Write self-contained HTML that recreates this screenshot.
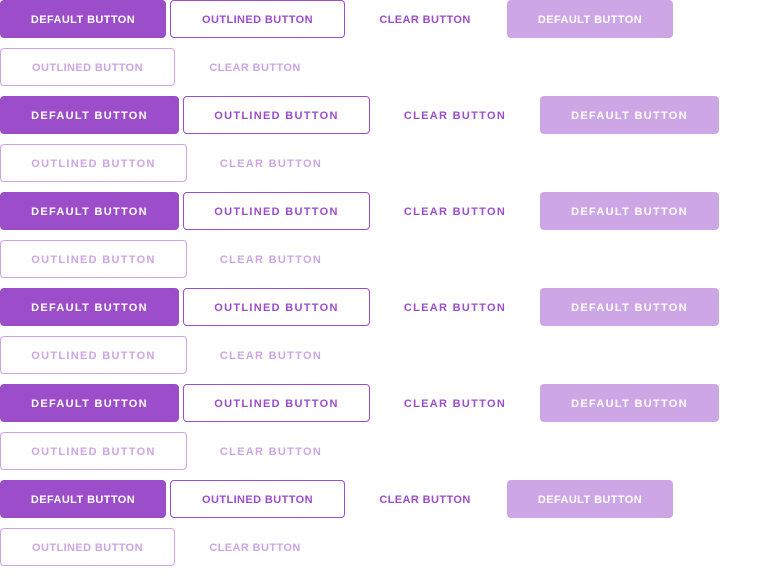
<!DOCTYPE html><html><head><style>
body{margin:0;width:760px;height:576px;background:#fff;position:relative;overflow:hidden;font-family:"Liberation Sans",sans-serif}
.b{position:absolute;height:38px;box-sizing:border-box;display:flex;align-items:center;justify-content:center;font-size:11px;font-weight:bold;border-radius:4px;white-space:nowrap;padding-top:2px}
.a{letter-spacing:0.4px}.g{letter-spacing:1.3px}
.d{background:#9b4dca;color:#fff}
.o{border:1px solid #9b4dca;color:#9b4dca;background:#fff}
.c{color:#9b4dca}
.dd{background:#cda6e5;color:#fff}
.od{border:1px solid #cda6e5;color:#cda6e5}
.cd{color:#cda6e5}
</style></head><body>
<div class="b a d" style="top:0;left:0;width:166px">DEFAULT BUTTON</div>
<div class="b a o" style="top:0;left:170px;width:175px">OUTLINED BUTTON</div>
<div class="b a c" style="top:0;left:345px;width:160px">CLEAR BUTTON</div>
<div class="b a dd" style="top:0;left:507px;width:166px">DEFAULT BUTTON</div>
<div class="b a od" style="top:48px;left:0;width:175px">OUTLINED BUTTON</div>
<div class="b a cd" style="top:48px;left:175px;width:160px">CLEAR BUTTON</div>

<div class="b g d" style="top:96px;left:0;width:179px">DEFAULT BUTTON</div>
<div class="b g o" style="top:96px;left:183px;width:187px">OUTLINED BUTTON</div>
<div class="b g c" style="top:96px;left:370px;width:170px">CLEAR BUTTON</div>
<div class="b g dd" style="top:96px;left:540px;width:179px">DEFAULT BUTTON</div>
<div class="b g od" style="top:144px;left:0;width:187px">OUTLINED BUTTON</div>
<div class="b g cd" style="top:144px;left:187px;width:168px">CLEAR BUTTON</div>

<div class="b g d" style="top:192px;left:0;width:179px">DEFAULT BUTTON</div>
<div class="b g o" style="top:192px;left:183px;width:187px">OUTLINED BUTTON</div>
<div class="b g c" style="top:192px;left:370px;width:170px">CLEAR BUTTON</div>
<div class="b g dd" style="top:192px;left:540px;width:179px">DEFAULT BUTTON</div>
<div class="b g od" style="top:240px;left:0;width:187px">OUTLINED BUTTON</div>
<div class="b g cd" style="top:240px;left:187px;width:168px">CLEAR BUTTON</div>

<div class="b g d" style="top:288px;left:0;width:179px">DEFAULT BUTTON</div>
<div class="b g o" style="top:288px;left:183px;width:187px">OUTLINED BUTTON</div>
<div class="b g c" style="top:288px;left:370px;width:170px">CLEAR BUTTON</div>
<div class="b g dd" style="top:288px;left:540px;width:179px">DEFAULT BUTTON</div>
<div class="b g od" style="top:336px;left:0;width:187px">OUTLINED BUTTON</div>
<div class="b g cd" style="top:336px;left:187px;width:168px">CLEAR BUTTON</div>

<div class="b g d" style="top:384px;left:0;width:179px">DEFAULT BUTTON</div>
<div class="b g o" style="top:384px;left:183px;width:187px">OUTLINED BUTTON</div>
<div class="b g c" style="top:384px;left:370px;width:170px">CLEAR BUTTON</div>
<div class="b g dd" style="top:384px;left:540px;width:179px">DEFAULT BUTTON</div>
<div class="b g od" style="top:432px;left:0;width:187px">OUTLINED BUTTON</div>
<div class="b g cd" style="top:432px;left:187px;width:168px">CLEAR BUTTON</div>

<div class="b a d" style="top:480px;left:0;width:166px">DEFAULT BUTTON</div>
<div class="b a o" style="top:480px;left:170px;width:175px">OUTLINED BUTTON</div>
<div class="b a c" style="top:480px;left:345px;width:160px">CLEAR BUTTON</div>
<div class="b a dd" style="top:480px;left:507px;width:166px">DEFAULT BUTTON</div>
<div class="b a od" style="top:528px;left:0;width:175px">OUTLINED BUTTON</div>
<div class="b a cd" style="top:528px;left:175px;width:160px">CLEAR BUTTON</div>
</body></html>
